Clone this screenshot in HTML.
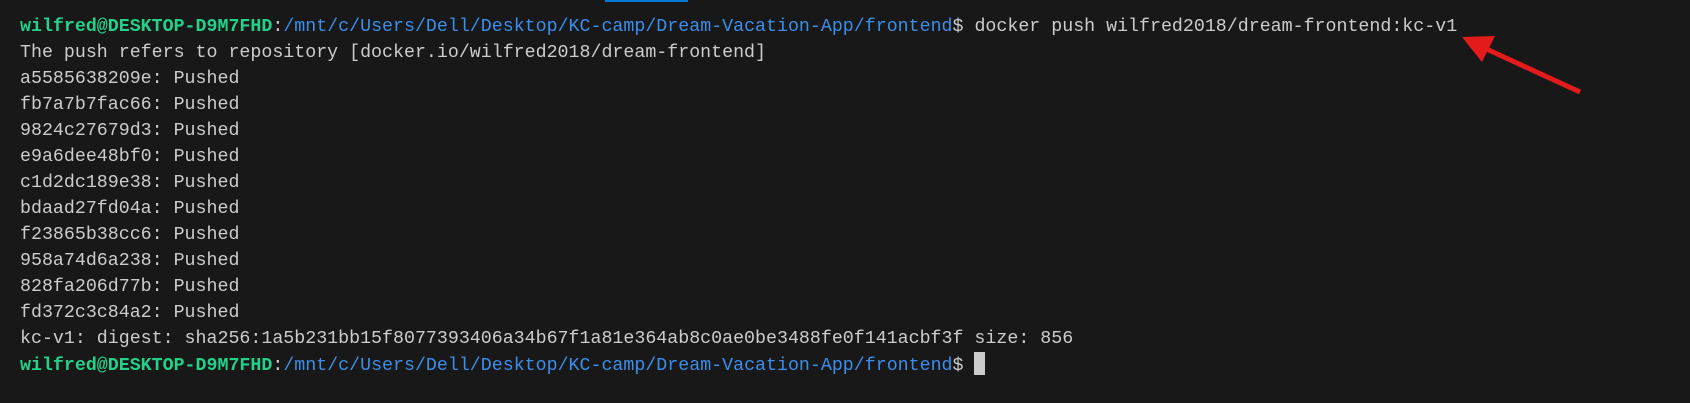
<!DOCTYPE html>
<html><head><meta charset="utf-8"><style>
html,body{margin:0;padding:0;background:#181818;width:1690px;height:403px;overflow:hidden;}
#bar{position:absolute;left:605px;top:0;width:83px;height:2px;background:#0078d4;}
pre{position:absolute;left:20px;top:14px;margin:0;font-family:"Liberation Mono",monospace;font-size:18.3px;line-height:26px;color:#cccccc;white-space:pre;}
.g{color:#23d18b;font-weight:bold}
.b{color:#3b8eea}
.cur{display:inline-block;width:11px;height:23px;background:#cccccc;vertical-align:-5px;}
svg{position:absolute;left:0;top:0}
</style></head><body>
<div id="bar"></div>
<pre><span class="g">wilfred@DESKTOP-D9M7FHD</span>:<span class="b">/mnt/c/Users/Dell/Desktop/KC-camp/Dream-Vacation-App/frontend</span>$ docker push wilfred2018/dream-frontend:kc-v1
The push refers to repository [docker.io/wilfred2018/dream-frontend]
a5585638209e: Pushed
fb7a7b7fac66: Pushed
9824c27679d3: Pushed
e9a6dee48bf0: Pushed
c1d2dc189e38: Pushed
bdaad27fd04a: Pushed
f23865b38cc6: Pushed
958a74d6a238: Pushed
828fa206d77b: Pushed
fd372c3c84a2: Pushed
kc-v1: digest: sha256:1a5b231bb15f8077393406a34b67f1a81e364ab8c0ae0be3488fe0f141acbf3f size: 856
<span class="g">wilfred@DESKTOP-D9M7FHD</span>:<span class="b">/mnt/c/Users/Dell/Desktop/KC-camp/Dream-Vacation-App/frontend</span>$ <span class="cur"></span></pre>
<svg width="1690" height="403">
<line x1="1580" y1="92" x2="1480" y2="46" stroke="#e31b1b" stroke-width="5"/>
<polygon points="1462,37 1495,36 1482,62" fill="#e31b1b"/>
</svg>
</body></html>
